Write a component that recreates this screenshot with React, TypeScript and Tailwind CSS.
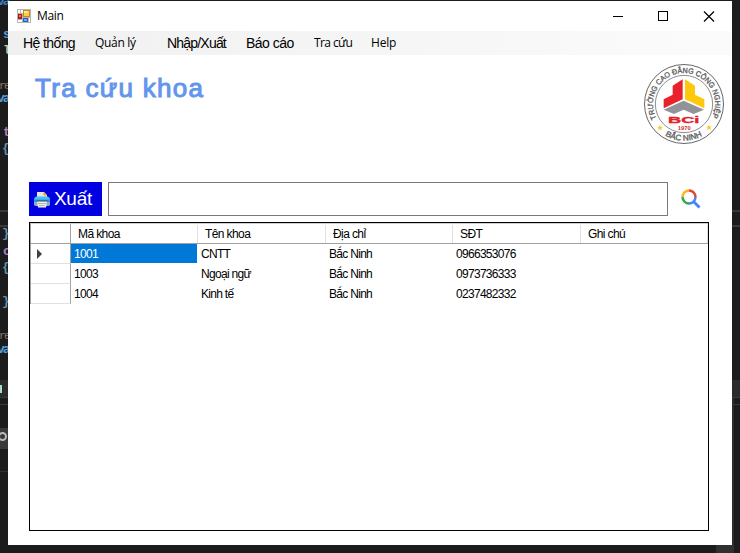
import React from "react";

const sans = "font-['Liberation_Sans',Arial,sans-serif]";
const ui = "font-['Open_Sans','Noto_Sans',sans-serif]";

const fragments = [
  { text: "va", top: -6, left: -3, color: "#3f7fc0" },
  { text: "s", top: 27, left: 3, color: "#569cd6" },
  { text: "l", top: 43, left: 3, color: "#b5cea8" },
  { text: "re", top: 78, left: -1, color: "#8c7768", small: true },
  { text: "va", top: 91, left: -3, color: "#569cd6" },
  { text: "t", top: 125, left: 3, color: "#b180bd" },
  { text: "{", top: 141, left: 2, color: "#5b92b4" },
  { text: "}", top: 226, left: 2, color: "#5b92b4" },
  { text: "c", top: 244, left: 3, color: "#b180bd" },
  { text: "{", top: 260, left: 2, color: "#5b92b4" },
  { text: "}", top: 294, left: 2, color: "#5b92b4" },
  { text: "re", top: 328, left: -1, color: "#8c7768", small: true },
  { text: "va", top: 342, left: -3, color: "#569cd6" },
];

function Backdrop() {
  return (
    <div className="absolute inset-0 overflow-hidden bg-[#1c1c1c]">
      <div className="absolute left-0 top-[210px] h-[17px] w-full border-y-2 border-[#383838]" />
      <div className="absolute left-0 top-[380px] h-[18px] w-full border-b border-[#3a3a3a] bg-[#2b2b2b]" />
      <div className="absolute left-0 top-[404px] h-px w-full bg-[#3a3a3a]" />
      <div className="absolute left-0 top-[428px] h-[21px] w-[8px] bg-[#3a3a3a]" />
      <div className="absolute left-0 top-[471px] h-px w-[8px] bg-[#303030]" />
      <div className="absolute right-[6px] top-[398px] h-[155px] w-[2px] bg-[#2d2d2d]" />
      <div className="absolute bottom-0 right-[6px] h-[8px] w-[18px] bg-[#303030]" />
      {fragments.map((f, i) => (
        <span
          key={i}
          className={`absolute font-['Liberation_Mono',monospace] leading-4 ${f.small ? "text-[11px] tracking-[-1.5px]" : "text-[13px] font-bold tracking-[-2px]"}`}
          style={{ top: f.top, left: f.left, color: f.color }}
        >
          {f.text}
        </span>
      ))}
      <div className="absolute left-0 top-[385px] h-[8px] w-[2px] bg-[#a5dec5]" />
      <div className="absolute left-[-2px] top-[432px] size-[9px] rounded-full border-2 border-[#bcbcbc]" />
    </div>
  );
}

function FormIcon() {
  return (
    <svg width="14" height="14" viewBox="0 0 14 14" shapeRendering="crispEdges">
      <rect width="14" height="14" fill="#b5b5b5" />
      <path d="M1 1h2v3H1zM4 1h2v3H4zM1 11h4v2H1zM12 9h1v4h-1z" fill="#fff" />
      <rect x="6" y="1" width="7" height="7" fill="#c98a13" />
      <rect x="7" y="2" width="5" height="5" fill="#fbd044" />
      <rect x="7" y="2" width="4" height="2" fill="#ffe78c" />
      <rect x="1" y="5" width="4" height="5" fill="#a91d17" />
      <rect x="2" y="6" width="2" height="2" fill="#ee6a5b" />
      <rect x="6" y="9" width="5" height="4" fill="#2861c4" />
      <rect x="7" y="10" width="3" height="2" fill="#6da5f5" />
    </svg>
  );
}

function SchoolLogo() {
  return (
    <svg width="82" height="82" viewBox="189 189 246 246" className={sans}>
      <circle cx="312" cy="312" r="118.5" fill="#fff" stroke="#666" strokeWidth="3" />
      <circle cx="312" cy="312" r="86" fill="none" stroke="#777" strokeWidth="2.500" />
      <path id="ringTop" d="M229.500 355A93 93 0 1 1 394.500 355" fill="none" />
      <path id="ringBottom" d="M255 406A110 110 0 0 0 369 406" fill="none" />
      <text fontSize="22.5" fill="#606060" stroke="#606060" strokeWidth="1">
        <textPath href="#ringTop" textLength="377" lengthAdjust="spacingAndGlyphs">TRƯỜNG CAO ĐẲNG CÔNG NGHIỆP</textPath>
      </text>
      <text fontSize="24" fill="#606060" stroke="#606060" strokeWidth="1">
        <textPath href="#ringBottom" textLength="117" lengthAdjust="spacingAndGlyphs">BẮC NINH</textPath>
      </text>
      <path d="M308 238V298L251 325V298L278 284V257Z" fill="#e9212b" />
      <path d="M315 238L345 257V284L373 298V325L315 298Z" fill="#fec90d" />
      <path d="M311 302L372 329L341 342L311 329L282 342L251 329Z" fill="#929398" />
      <text x="264" y="369" fontSize="26" fontWeight="bold" fill="#e2212b" stroke="#e2212b" strokeWidth="1" textLength="94" lengthAdjust="spacingAndGlyphs">BCi</text>
      <text x="293" y="389" fontSize="17" fontWeight="bold" fill="#d8303a" textLength="39" lengthAdjust="spacingAndGlyphs">1970</text>
      <path d="M240 376l2 5h5l-4 3 2 6-5-3-5 3 2-6-4-3h5z" fill="#f8c922" stroke="#f8c922" />
      <path d="M387 375l2 5h5l-4 3 2 6-5-3-5 3 2-6-4-3h5z" fill="#f8c922" stroke="#f8c922" />
    </svg>
  );
}

function PrinterIcon() {
  return (
    <svg width="16" height="17" viewBox="0 0 16 17">
      <path d="M3 1h7l3 3v4H3z" fill="#e6e6e6" />
      <path d="M9.500 .5L13 4.500H9.500z" fill="#f59b2c" />
      <rect x="0" y="6" width="16" height="9" rx="2" fill="#1b9ce6" />
      <path d="M2 5.500h12l2 3H0z" fill="#49bdf4" />
      <path d="M0 11h16v2q0 2-2 2H2q-2 0-2-2z" fill="#98aab8" />
      <path d="M3 10h10l-1 6.500H4z" fill="#eee" />
      <path d="M4 12.500h8M5 14.500h6" stroke="#b4b4b4" />
      <path d="M2.500 10h11" stroke="#334d69" />
    </svg>
  );
}

function SearchIcon() {
  return (
    <svg width="20" height="20" viewBox="0 0 20 20" fill="none" strokeWidth="2.500">
      <path d="M1.500 8A6.600 6.600 0 0 1 8 1.500" stroke="#fbb825" />
      <path d="M8 1.500A6.600 6.600 0 0 1 14.500 8" stroke="#ea4335" />
      <path d="M14.500 8A6.600 6.600 0 0 1 8 14.500" stroke="#4285f4" />
      <path d="M8 14.500A6.600 6.600 0 0 1 1.500 8" stroke="#34a853" />
      <path d="M12.500 12.500L18.500 18.500" stroke="#4285f4" strokeWidth="2.800" />
    </svg>
  );
}

function TitleBar() {
  return (
    <div className="flex h-[30px] items-center pl-[9px]">
      <FormIcon />
      <span className={`${ui} ml-[6px] text-[12px] leading-4 tracking-[-0.3px]`}>Main</span>
      <svg className="ml-auto mr-[17px]" width="102" height="11" viewBox="0 0 102 11" fill="none" stroke="#000">
        <path d="M0 5.500h10M45.500 .5h9v9h-9z" shapeRendering="crispEdges" />
        <path d="M91 .5l10 10M101 .5l-10 10" strokeWidth="1.200" />
      </svg>
    </div>
  );
}

function MenuBar() {
  return (
    <nav className="flex h-6 items-center bg-linear-to-r from-[#f0f0f0] to-[#fbfbfb] pl-[15px] leading-5 text-black">
      <span className={`${sans} w-[72px] text-[14px] tracking-[-0.6px]`}>Hệ thống</span>
      <span className={`${ui} w-[72px] text-[12px] tracking-[-0.3px]`}>Quản lý</span>
      <span className={`${sans} w-[79px] text-[14px] tracking-[-0.8px]`}>Nhập/Xuất</span>
      <span className={`${sans} w-[68px] text-[14px] tracking-[-0.5px]`}>Báo cáo</span>
      <span className={`${ui} w-[57px] text-[12px] tracking-[-0.6px]`}>Tra cứu</span>
      <span className={`${ui} text-[12px] tracking-[-0.2px]`}>Help</span>
    </nav>
  );
}

const columns = ["Mã khoa", "Tên khoa", "Địa chỉ", "SĐT", "Ghi chú"];
const rows = [
  ["1001", "CNTT", "Bắc Ninh", "0966353076", ""],
  ["1003", "Ngoại ngữ", "Bắc Ninh", "0973736333", ""],
  ["1004", "Kinh tế", "Bắc Ninh", "0237482332", ""],
];
const grid = "grid grid-cols-[40px_127px_128px_127px_128px_127px]";

function DataGrid() {
  return (
    <div className={`${sans} h-[309px] w-[680px] border border-black text-[12px] leading-[18px] tracking-[-0.7px]`}>
      <div className={`${grid} h-[21px] border-b border-l border-t border-b-[#a0a0a0] border-l-[#a0a0a0] border-t-[#d0d0d0]`}>
        <div className="border-r border-[#a0a0a0]" />
        {columns.map((c) => (
          <div key={c} className="mt-px border-r border-[#e0e0e0] pl-[7px] tracking-[-0.6px]">{c}</div>
        ))}
      </div>
      {rows.map((row, r) => (
        <div key={row[0]} className={`${grid} h-5 border-l border-[#a0a0a0]`}>
          <div className="flex items-center border-b border-r border-b-[#e0e0e0] border-r-[#a0a0a0] pl-[6px]">
            {r === 0 && (
              <svg width="5" height="10" viewBox="0 0 5 10">
                <path d="M0 0v10l5-5z" fill="#404040" />
              </svg>
            )}
          </div>
          {row.map((value, c) => (
            <div
              key={c}
              className={`h-[19px] pl-[3px] leading-[21px] ${r === 0 && c === 0 ? "mr-px bg-[#0078d7] text-white" : ""}`}
            >
              {value}
            </div>
          ))}
        </div>
      ))}
    </div>
  );
}

export default function App() {
  return (
    <div className="relative h-[553px] w-[740px] overflow-hidden">
      <Backdrop />
      <div className="relative ml-2 mt-px flex h-[544px] w-[724px] flex-col bg-white text-black">
        <TitleBar />
        <MenuBar />
        <header className="flex h-[127px] justify-between pl-[27px] pr-[7px] pt-[8px]">
          <h1 className={`${sans} mt-[9px] h-8 text-[26px] leading-8 tracking-[1.3px] text-[#6495ed] [-webkit-text-stroke:1px_#6495ed]`}>
            Tra cứu khoa
          </h1>
          <SchoolLogo />
        </header>
        <main className="flex flex-col gap-[6px] pl-[21px]">
          <div className="flex h-[34px] items-center">
            <button className={`${sans} flex h-[34px] w-[73px] items-center gap-1 bg-[#0000e0] pl-[5px] text-[19px] tracking-[-0.3px] text-white`}>
              <PrinterIcon />
              Xuất
            </button>
            <input className="ml-[6px] mr-[13px] h-[34px] w-[560px] border border-[#7a7a7a] bg-white outline-none" />
            <SearchIcon />
          </div>
          <DataGrid />
        </main>
      </div>
    </div>
  );
}
